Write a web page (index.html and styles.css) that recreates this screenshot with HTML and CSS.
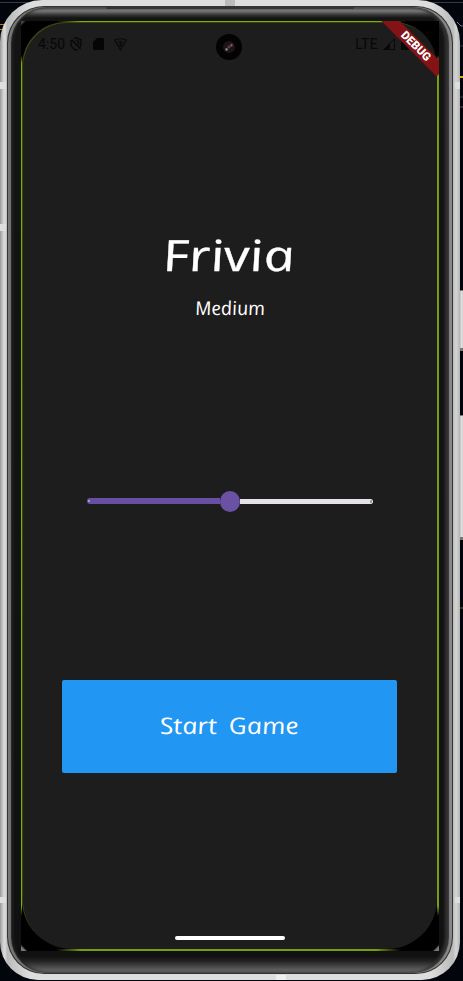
FILE: index.html
```
<!DOCTYPE html>
<html lang="en">
<head>
<meta charset="utf-8">
<title>Frivia</title>
<link rel="stylesheet" href="styles.css">
</head>
<body>
<div class="device">
  <svg class="desk" width="463" height="981" viewBox="0 0 463 981">
    <path d="M0 2.500H34M424 2.500H463M457 46H463M459 97H463" stroke="#343b43"/>
    <path d="M0 24.500H4M0 29.500H3" stroke="#b88708"/>
    <path d="M457 22l4 4h2" fill="none" stroke="#547b98"/>
    <path d="M459 77H463" stroke="#d8ac00" stroke-width="2"/>
    <path d="M459 107H463" stroke="#79434a"/>
    <path d="M460 608H463" stroke="#76601b"/>
  </svg>
  <i class="key power"></i>
  <i class="key volume"></i>
  <div class="shell">
    <i class="band band-top"></i><i class="band band-left"></i><i class="band band-mid"></i><i class="band band-right"></i>
    <i class="band band-low-left"></i><i class="band band-low-right"></i><i class="band band-bottom"></i>
    <div class="rim">
      <div class="bezel">
        <i class="speaker"></i>
        <div class="well">
          <main class="screen">
            <header class="status">
              <span class="clock">4:50</span>
              <svg class="shield" width="12" height="14" viewBox="0 0 12 14"><path d="M4 1.600L6 .8 11 2.800V6.500Q11 9 9.500 11M7.500 12.500L6 13.200Q1 11 1 6.500V3M1.500 2.500L10.500 12M6 3.500L8.500 4.500V8" fill="none" stroke="#080808" stroke-width="1.300"/></svg>
              <svg class="card" width="11" height="12" viewBox="0 0 11 12"><path d="M4 0H10Q11 0 11 1V11Q11 12 10 12H1Q0 12 0 11V4Z" fill="#050505"/></svg>
              <svg class="wifi" width="13" height="13" viewBox="0 0 13 13"><path d="M.8 2Q6.500-.5 12.200 2L6.500 12ZM4 3.500h5M4.500 5.500h4M5 7.500h3M6.500 3v6" fill="none" stroke="#0a0a0a" stroke-width="1.200"/></svg>
              <span class="lte">LTE</span>
              <svg class="signal" width="12" height="12" viewBox="0 0 12 12"><path d="M11.500 .8V11.500H.8Z" fill="none" stroke="#080808"/><path d="M7 5V12H0Z" fill="#080808"/></svg>
              <svg class="battery" width="8" height="12" viewBox="0 0 8 12"><path d="M2 0H6V1H8V12H0V1H2Z" fill="#080808"/></svg>
            </header>
            <section class="heading">
              <svg class="title" width="160" height="60" viewBox="0 0 160 60" role="img">
                <text class="title-text" transform="translate(14 44) skewX(12)" textLength="132" lengthAdjust="spacingAndGlyphs">Frivia</text>
              </svg>
              <svg class="level" width="80" height="32" viewBox="0 0 80 32" role="img"><text class="level-text" transform="translate(5 23) skewX(10)" textLength="70" lengthAdjust="spacingAndGlyphs">Medium</text></svg>
            </section>
            <div class="slider"><i class="active"></i><i class="thumb"></i><i class="inactive"></i></div>
            <button class="start"><svg width="150" height="40" viewBox="0 0 150 40" role="img"><text class="start-text" transform="translate(6 27) skewX(11)" textLength="139" lengthAdjust="spacingAndGlyphs">Start Game</text></svg></button>
            <i class="home"></i>
          </main>
          <i class="lens"><b></b></i>
          <span class="debug">DEBUG</span>
        </div>
      </div>
    </div>
  </div>
</div>
</body>
</html>
```
FILE: styles.css
```
* { box-sizing: border-box; }
body { margin: 0; background: #02050b; overflow: hidden; font-family: Roboto, sans-serif; }
i { display: block; }
svg { flex: none; overflow: visible; }
.device { position: relative; width: 463px; height: 981px; }
.desk { position: absolute; inset: 0; }
.key { position: absolute; left: 457px; width: 8px; border: solid #777; border-width: 1px 0 3px; background: linear-gradient(90deg, #aaa 0 3px, #e2e2e2 4px, #c4c4c4); }
.power { top: 290px; height: 61px; }
.volume { top: 415px; height: 125px; }
.shell { position: relative; width: 460px; height: 980px; padding: 6px 7px 6px; border-radius: 42px 42px 38px 38px; background: linear-gradient(90deg, #999, #ccc 3px, #ddd 5px, #bbb 7px, #ddd 30px 430px, #bbb 453px, #d5d5d5 456px, #b5b5b5); }
.band { position: absolute; background: #dedede; }
.band-top { left: 225px; top: 0; width: 10px; height: 6px; background: #bbb; }
.band-left { left: 0; top: 82px; width: 6px; height: 7px; }
.band-mid { left: 0; top: 224px; width: 6px; height: 7px; }
.band-right { right: 0; top: 82px; width: 5px; height: 7px; }
.band-low-left { left: 0; top: 897px; width: 6px; height: 6px; }
.band-low-right { right: 0; top: 897px; width: 5px; height: 6px; }
.band-bottom { left: 276px; bottom: 0; width: 10px; height: 5px; background: #efefef; }
.rim { height: 968px; padding: 1px; border-radius: 37px; background: #333; }
.bezel { position: relative; height: 966px; padding: 14px 14px 23px 13px; border-radius: 36px; background: linear-gradient(#555 0, #777 4px, #333 8px, #141414 11px, #111 949px, #222 954px, #666 964px); box-shadow: inset 3px 0 1px #777, inset -3px 0 1px #888, inset 5px 0 3px #222, inset -7px 0 3px #333; }
.speaker { position: absolute; left: 98px; top: 0; width: 248px; height: 2px; background: #333; border-radius: 2px; }
.well { position: relative; width: 418px; height: 930px; padding: 1px 2px 2px 1px; overflow: hidden; background:
  linear-gradient(90deg, transparent 35px, #7fae00 60px 360px, transparent 385px) 0 0 / 418px 1px no-repeat,
  linear-gradient(90deg, transparent 35px, #779f0d 60px 355px, transparent 380px) 0 928px / 418px 2px no-repeat,
  linear-gradient(transparent 34px, #7fae00 42px 885px, transparent 895px) 0 0 / 1px 930px no-repeat,
  linear-gradient(transparent 34px, #779f0d 42px 885px, transparent 895px) 416px 0 / 2px 930px no-repeat,
  linear-gradient(45deg, #777 0 3px, transparent 5px),
  linear-gradient(135deg, #444 0 2px, #000 4px calc(100% - 5px), #777 calc(100% - 3px)); }
.screen { width: 415px; height: 927px; border-radius: 44px 44px 50px 50px; background: #1d1d1d; box-shadow: inset 1px 1px 0 #39470f; display: flex; flex-direction: column; align-items: center; }
.status { width: 415px; height: 44px; padding: 15px 28px 0 16px; display: flex; align-items: flex-start; color: #070707; font-size: 14px; line-height: 14px; }
.clock { width: 28px; }
.shield { margin-left: 4px; }
.card { margin: 1px 0 0 11px; }
.wifi { margin: 1px 0 0 10px; }
.lte { margin-left: auto; margin-right: 5px; letter-spacing: .3px; }
.signal { margin-top: 1px; }
.battery { margin: 1px 0 0 6px; }
.heading { margin-top: 144px; height: 110px; display: flex; flex-direction: column; align-items: center; }
.title { margin: 17px 0 0 3px; }
.level { margin: 5px 0 0 2px; }
text { fill: #fff; font-family: "Open Sans", sans-serif; font-style: italic; }
.title-text { font-size: 43px; stroke: #fff; stroke-width: .3px; }
.level-text { font-size: 19px; }
.start-text { font-size: 23px; word-spacing: 4px; }
.slider { margin: 170px 0 0; width: 286px; height: 22px; display: flex; align-items: center; }
.active { width: 133px; height: 6px; border-radius: 3px 0 0 3px; background: radial-gradient(circle at 2px 3px, #a798c8 0 1px, #6750a4 1.500px); }
.thumb { width: 20px; height: 21px; border-radius: 50%; background: #6a51a4; }
.inactive { width: 133px; height: 5px; border-radius: 0 3px 3px 0; background: radial-gradient(circle at 131px 2.500px, #99939d 0 1px, #e6e0e9 1.500px); }
.start { margin: 168px 0 0; width: 335px; height: 93px; padding: 0; border: 0; border-radius: 2px; background: #2196f3; display: flex; align-items: center; justify-content: center; }
.home { width: 110px; height: 4px; margin-top: 163px; border-radius: 2px; background: #fff; }
.lens { position: absolute; left: 195px; top: 13px; width: 26px; height: 26px; border-radius: 50%; background: #030303; padding: 7px; }
.lens b { display: block; width: 12px; height: 12px; border-radius: 50%; background: radial-gradient(circle at 70% 35%, #a06b92 0, transparent 2px), radial-gradient(circle at 50% 50%, #7d5d2b 0, transparent 2px), radial-gradient(circle at 30% 70%, #aaa 0, transparent 2px), #1b1518; }
.debug { position: absolute; left: 352px; top: 16px; width: 80px; height: 13px; transform: rotate(45deg); background: #831315; color: #fff; font: 900 11.500px/13px Roboto, sans-serif; text-align: center; text-indent: 8px; }
```
